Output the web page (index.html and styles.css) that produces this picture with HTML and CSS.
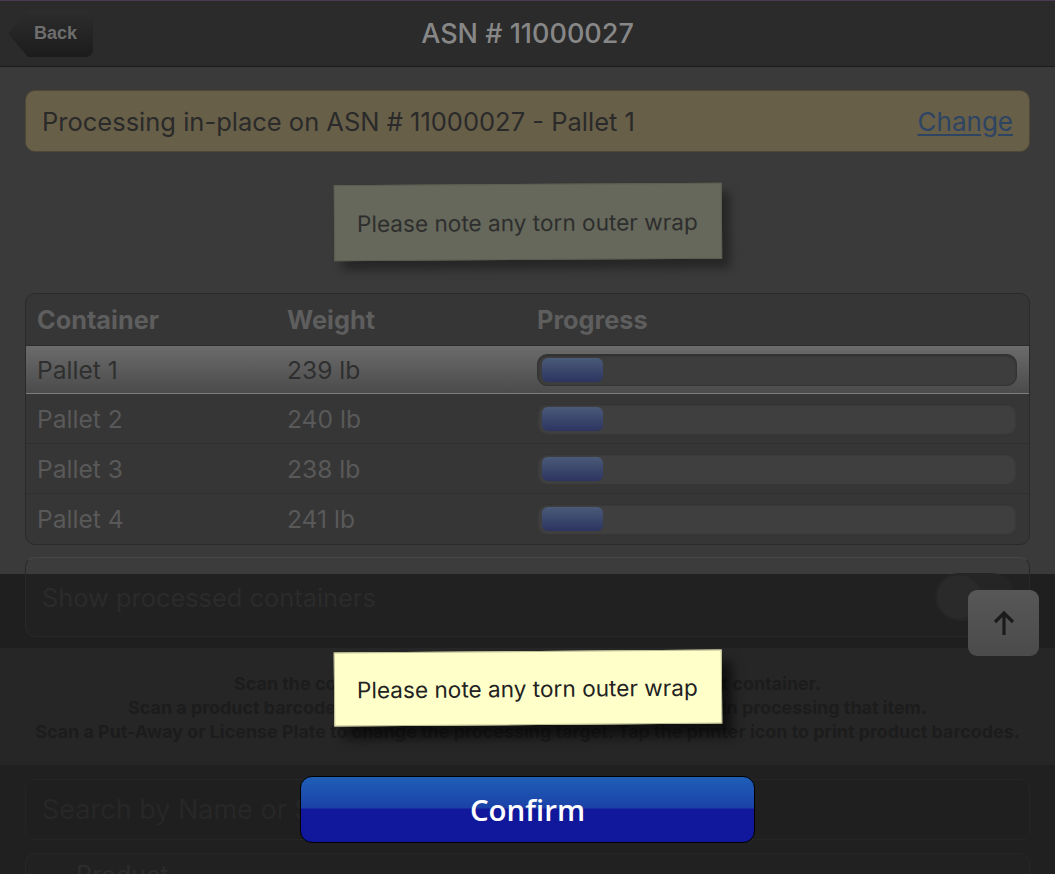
FILE: index.html
```html
<!DOCTYPE html>
<html lang="en">
<head>
    <meta charset="UTF-8">
    <title>ASN # 11000027</title>
    <link rel="stylesheet" href="styles.css">
</head>
<body>
<div class="screen">
    <header class="topbar">
        <a class="back-btn" href="#">Back</a>
        <h1>ASN # 11000027</h1>
        <span></span>
    </header>

    <div class="content">
        <div class="banner">
            <span>Processing in-place on ASN # 11000027 - Pallet 1</span>
            <a href="#">Change</a>
        </div>

        <div class="note note-dim">Please note any torn outer wrap</div>

        <div class="grid-card">
            <div class="row head">
                <span>Container</span>
                <span>Weight</span>
                <span>Progress</span>
            </div>
            <div class="row current">
                <span>Pallet 1</span>
                <span>239 lb</span>
                <div class="bar"><div class="fill"></div></div>
            </div>
            <div class="row">
                <span>Pallet 2</span>
                <span>240 lb</span>
                <div class="bar"><div class="fill"></div></div>
            </div>
            <div class="row">
                <span>Pallet 3</span>
                <span>238 lb</span>
                <div class="bar"><div class="fill"></div></div>
            </div>
            <div class="row">
                <span>Pallet 4</span>
                <span>241 lb</span>
                <div class="bar"><div class="fill"></div></div>
            </div>
        </div>
    </div>

    <div class="processed-band">
        <div class="processed-card">
            <span>Show processed containers</span>
            <span class="toggle"><span class="knob"></span></span>
        </div>
    </div>

    <div class="hints">
        <p>Scan the container barcode to begin processing into that container.</p>
        <p>Scan a product barcode to highlight it in the container list and to begin processing that item.</p>
        <p>Scan a Put-Away or License Plate to change the processing target. Tap the printer icon to print product barcodes.</p>
    </div>

    <div class="footer">
        <div class="search">Search by Name or SKU</div>
        <div class="product-card">Product</div>
    </div>

    <!-- overlays -->
    <div class="note note-live">Please note any torn outer wrap</div>

    <button class="scroll-top" type="button">
        <svg width="71" height="66" viewBox="0 0 71 66">
            <path d="M36 45 V24 M27 32 L36 23 L45 32" fill="none" stroke="#1b1b1b" stroke-width="3.2" stroke-linecap="butt" stroke-linejoin="miter"/>
        </svg>
    </button>

    <button class="confirm" type="button">Confirm</button>
</div>
</body>
</html>
```

FILE: styles.css
```css
* { box-sizing: border-box; }
body { margin: 0; background: #202020; font-family: Inter, "Noto Sans", sans-serif; }
.screen { position: relative; width: 1055px; height: 874px; overflow: hidden; background: #3a3a3a; }

/* top bar */
.topbar { height: 67px; background: #2b2b2b; border-top: 1px solid #4a3b55; border-bottom: 1px solid #1b1b1b; display: grid; grid-template-columns: 1fr auto 1fr; align-items: center; }
.topbar h1 { margin: 0; font-size: 27px; font-weight: 500; color: #878787; }
.back-btn { justify-self: start; margin-left: 8px; width: 85px; height: 47px; padding-left: 26px; display: flex; align-items: center; font: bold 18px "Liberation Sans", Arial, sans-serif; color: #6e6e6e; text-decoration: none; background: linear-gradient(#2d2d2d, #1c1c1c); border-radius: 0 7px 7px 0; clip-path: polygon(0 50%, 20px 0, 100% 0, 100% 100%, 20px 100%); }

/* page content (dimmed) */
.content { padding: 23px 25px 12px; }
.banner { height: 62px; background: #675f48; border: 1px solid #4d4736; border-radius: 10px; display: flex; align-items: center; justify-content: space-between; padding: 0 16px; font-size: 25.5px; color: #2a2a2a; }
.banner a { font-size: 26px; color: #2e4463; text-decoration: underline; text-underline-offset: 3px; }

.note { width: 388px; height: 76px; display: flex; align-items: center; padding-left: 22px; font-size: 22.6px; }
.note-dim { margin: 32px auto 0; background: #65685a; border: 1px solid #5c5e51; color: #2e2e2e; box-shadow: 8px 9px 10px rgba(0,0,0,0.35); transform: rotate(-0.35deg); }

.grid-card { margin-top: 33px; border: 1px solid #2a2a2a; border-radius: 10px; overflow: hidden; background: #363636; }
.row { display: grid; grid-template-columns: 250px 250px 1fr; align-items: center; height: 50px; padding: 0 12px 0 11px; font-size: 24.6px; color: #595959; border-bottom: 1px solid #303030; }
.row:last-child { border-bottom: none; }
.row.head { height: 52px; font-size: 25.3px; font-weight: 700; color: #5e5e5e; border-bottom: 1px solid #2c2c2c; }
.row.current { height: 48px; background: linear-gradient(#6b6b6b, #4b4b4b); color: #2f2f2f; border-bottom: 1px solid #7e7e7e; }

.bar { height: 32px; border-radius: 10px; background: #3f3f3f; border: 1px solid #373737; box-shadow: inset 0 1px 2px rgba(0,0,0,0.25); padding: 3px 4px; }
.current .bar { background: #3d3d3d; border-color: #333; }
.fill { width: 61px; height: 24px; border-radius: 6px; background: linear-gradient(#4a5a78, #2c3460); }

/* processed toggle, under the lower panel */
.processed-band { height: 91px; padding: 0 25px; background: linear-gradient(#3a3a3a 0 17px, #1f1f1f 17px); }
.processed-card { height: 80px; border: 1px solid #282828; border-top-color: #474747; border-radius: 10px; background: linear-gradient(#3c3c3c 0 16px, #212121 16px); display: flex; align-items: center; justify-content: space-between; padding: 0 14px 0 16px; font-size: 25.4px; color: #2b2b2b; }
.toggle { width: 80px; height: 48px; border-radius: 24px; background: #252525; padding: 2px; }
.knob { display: block; width: 44px; height: 44px; border-radius: 50%; background: #2a2a2a; }

.hints { height: 117px; background: #262626; padding-top: 24px; text-align: center; font-size: 17.9px; font-weight: 700; line-height: 24px; color: #1c1c1c; }
.hints p { margin: 0; white-space: nowrap; }

.footer { height: 109px; background: #202020; padding: 14px 25px 0; }
.search { height: 61px; border: 1px solid #252525; border-radius: 10px; background: #1f1f1f; display: flex; align-items: center; padding-left: 16px; font-size: 27px; color: #272727; }
.product-card { margin-top: 13px; height: 80px; border: 1px solid #272727; border-radius: 10px; background: #212121; padding: 6px 50px; font-size: 25px; color: #2c2c2c; }

/* overlays */
.note-live { position: absolute; left: 334px; top: 651px; height: 74px; background: #ffffca; border: 1px solid #bdbd95; color: #222; box-shadow: 10px 12px 12px rgba(0,0,0,0.6); transform: rotate(-0.45deg); }

.scroll-top { position: absolute; left: 968px; top: 590px; width: 71px; height: 66px; padding: 0; border: none; border-radius: 9px; background: linear-gradient(#5a5a5a, #4e4e4e); opacity: 0.95; }
.scroll-top svg { display: block; }

.confirm { position: absolute; left: 300px; top: 776px; width: 455px; height: 67px; border: 1px solid #000; border-radius: 12px; background: linear-gradient(#1f5fb8 0%, #1b41a7 48%, #11189b 49%, #10179a 100%); color: #fff; font: 600 29.5px "Open Sans", sans-serif; padding: 0; }
```
